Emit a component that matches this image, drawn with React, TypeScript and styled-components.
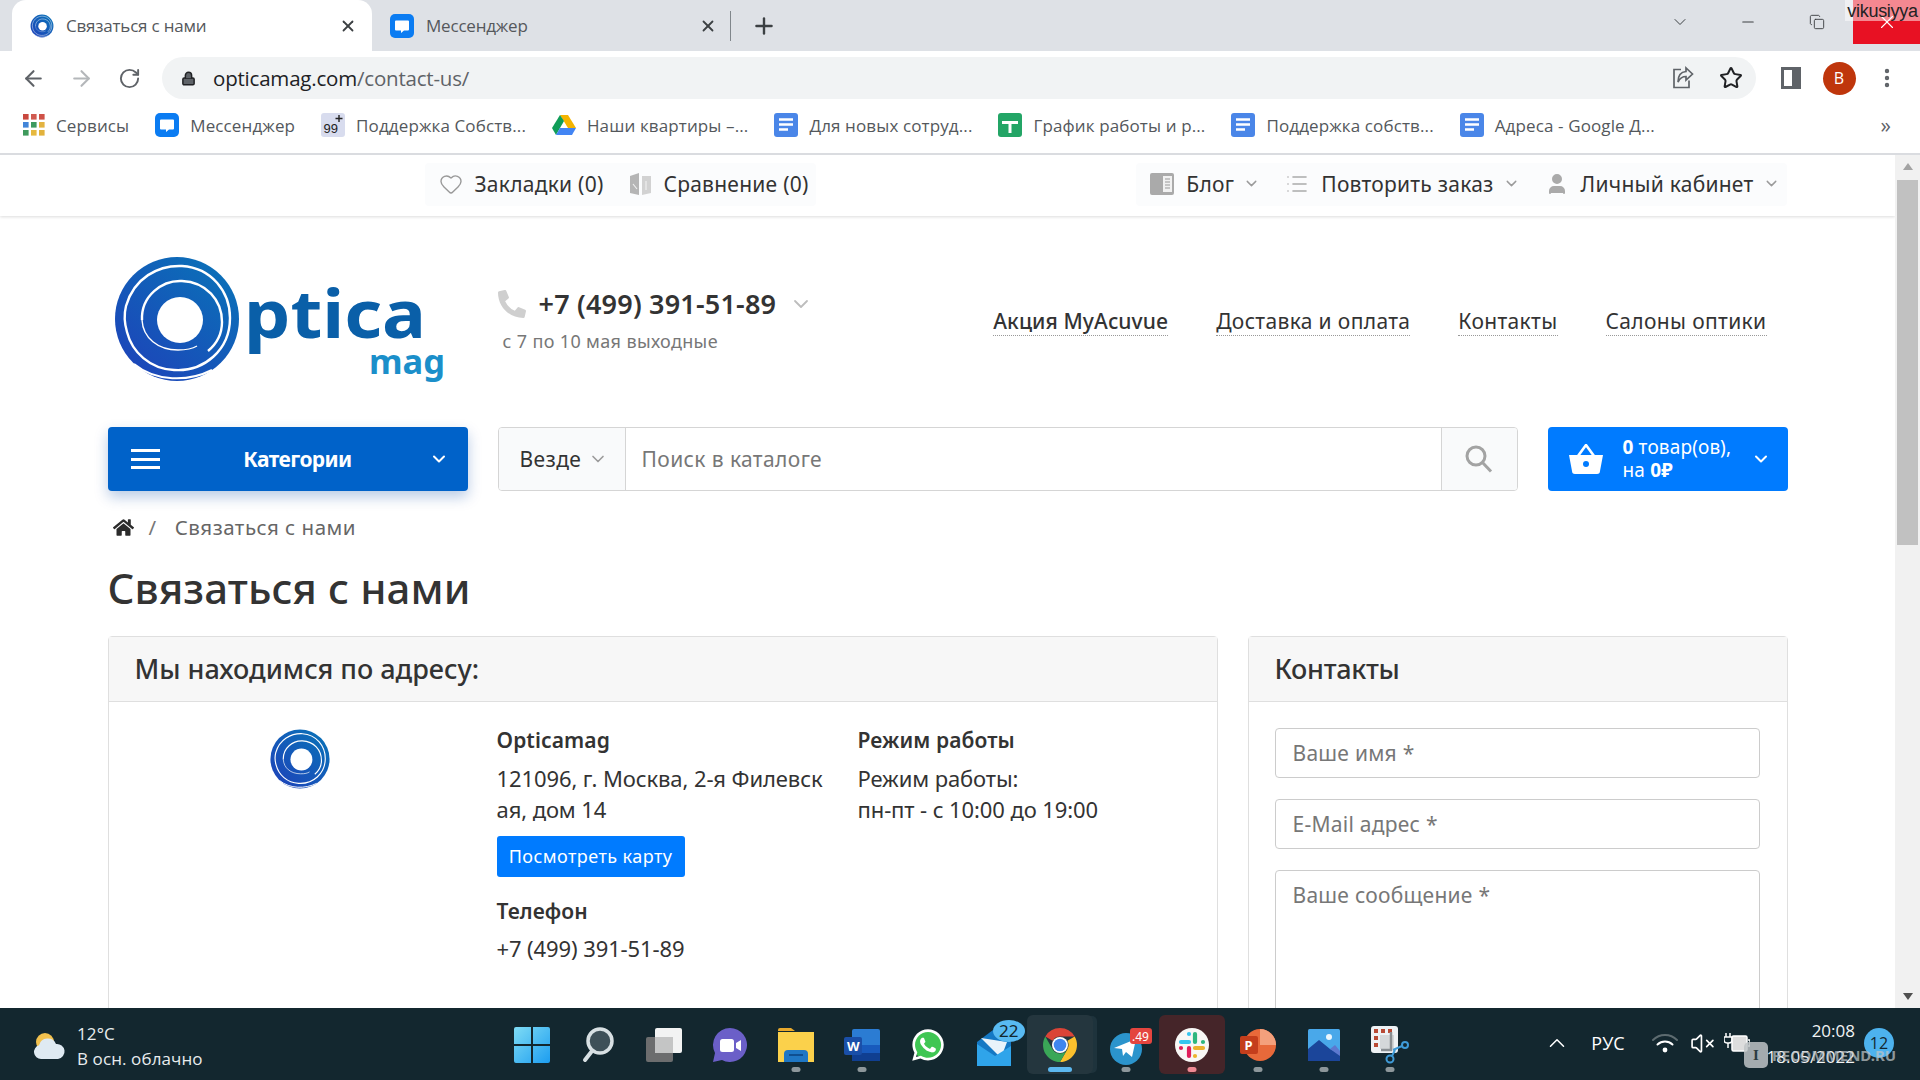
import React from "react";
import styled, { createGlobalStyle } from "styled-components";
import { ArrowLeft, ArrowRight, RotateCw, Lock, Star, ChevronDown, ChevronUp, Plus, X, Minus, Heart, VolumeX, Copy, EllipsisVertical, List, User } from "lucide-react";
import { FaPhoneAlt, FaHome, FaWhatsapp } from "react-icons/fa";

const SITE = `"Noto Sans", "Open Sans", sans-serif`;
const UI = `"Open Sans", "Noto Sans", sans-serif`;

const Global = createGlobalStyle`
  html, body { margin: 0; padding: 0; width: 1920px; height: 1080px; overflow: hidden; background: #fff; }
  * { box-sizing: border-box; }
  svg { display: block; flex: none; }
`;

const Screen = styled.div`
  width: 1920px; height: 1080px; display: flex; flex-direction: column; position: relative; overflow: hidden; font-family: ${UI};
`;
const TabStrip = styled.div`
  height: 51px; flex: none; background: #dee1e6; display: flex; padding-left: 12px; color: #45494d; position: relative;
`;
const Tab = styled.div<{ $active?: boolean }>`
  width: 360px; height: 51px; display: flex; align-items: center; gap: 12px; padding: 0 15px 0 18px;
  border-radius: 14px 14px 0 0; font-size: 17px; letter-spacing: -0.2px; background: ${(p) => (p.$active ? "#fff" : "transparent")};
  color: #55585c;
`;
const TabTitle = styled.span`flex: 1;`;
const Sep = styled.div`width: 1px; height: 30px; background: #80868b; margin-top: 11px; margin-left: -2px;`;
const NewTab = styled.div`width: 66px; display: flex; align-items: center; justify-content: center; color: #3c4043;`;
const WinControls = styled.div`margin-left: auto; display: flex; align-items: flex-start; color: #3c4043;`;
const WinBtn = styled.div<{ $w: number; $danger?: boolean }>`
  width: ${(p) => p.$w}px; height: 44px; display: flex; align-items: center; justify-content: center;
  background: ${(p) => (p.$danger ? "#e81123" : "transparent")}; color: ${(p) => (p.$danger ? "#fff" : "#3c4043")};
`;
const NameTag = styled.div`
  position: absolute; top: 0; right: 0; width: 75px; height: 21px; background: rgba(255,255,255,.5); color: #222;
  font: 18px/22px "Liberation Sans", sans-serif; white-space: nowrap; text-align: center; letter-spacing: -0.3px;
`;
const Toolbar = styled.div`
  height: 54px; flex: none; display: flex; align-items: center; padding-left: 9px; background: #fff; color: #5f6368;
`;
const ToolBtn = styled.div<{ $dim?: boolean }>`
  width: 48px; height: 48px; display: flex; align-items: center; justify-content: center; color: ${(p) => (p.$dim ? "#b4b7ba" : "#5f6368")};
`;
const Omni = styled.div`
  width: 1594px; height: 42px; margin: 0 11px 0 9px; border-radius: 21px; background: #f1f3f4; display: flex; align-items: center;
  padding: 0 13px 0 19px; font-size: 20.5px; letter-spacing: -0.2px; color: #202124; gap: 17px;
`;
const Url = styled.span`flex: 1; span { color: #5f6368; }`;
const OmniIcons = styled.div`display: flex; gap: 24px; align-items: center;`;
const Avatar = styled.div`
  width: 33px; height: 33px; border-radius: 50%; background: #bf360c; color: #fff; font-size: 16px; display: flex; align-items: center; justify-content: center;
`;
const Bookmarks = styled.div`
  height: 50px; flex: none; display: flex; align-items: center; gap: 26px; padding: 0 0 8px 23px; border-bottom: 2px solid #dadce0;
  font-size: 17px; letter-spacing: 0.12px; color: #54585c; position: relative; background: #fff;
`;
const Bookmark = styled.div`display: flex; align-items: center; gap: 11px; white-space: nowrap;`;
const More = styled.div`margin-left: auto; padding-right: 29px; font-size: 21px; color: #5f6368;`;

const Viewport = styled.div`flex: 1; min-height: 0; display: flex; overflow: hidden;`;
const Page = styled.div`flex: 1; min-width: 0; font-family: ${SITE}; color: #333; overflow: hidden;`;
const ScrollTrack = styled.div`
  width: 25px; flex: none; background: #f1f1f1; display: flex; flex-direction: column; align-items: center; color: #a3a3a3; position: relative;
`;
const ScrollArrow = styled.div<{ $down?: boolean }>`
  height: 25px; display: flex; align-items: center; justify-content: center; flex: none;
  &::after { content: ""; border: 5.5px solid transparent; ${(p) => (p.$down ? "border-top: 7px solid #505050; margin-top: 7px;" : "border-bottom: 7px solid #a3a3a3; margin-bottom: 7px;")} }
`;
const ScrollThumb = styled.div`width: 21px; height: 365px; background: #c1c1c1; flex: none;`;
const ScrollSpace = styled.div`flex: 1;`;

const TopBar = styled.div`height: 61px; box-shadow: 0 1px 3px rgba(0,0,0,.14); background: #fff; position: relative;`;
const Container = styled.div`width: 1680px; margin: 0 auto;`;
const TopInner = styled(Container)`display: flex; justify-content: space-between; padding: 8px 1px 0 317px;`;
const TopGroup = styled.div<{ $gap: number }>`height: 43px; background: #fbfcfd; display: flex; align-items: center; border-radius: 4px; padding: 0 7px 2px 14px; gap: ${(p) => p.$gap}px;`;
const TopLink = styled.div`display: flex; align-items: center; gap: 12px; font-size: 21px; letter-spacing: 0.25px; white-space: nowrap; color: #333;`;
const Caret = styled(ChevronDown)`color: #9b9b9b; margin-left: -3px;`;
const ScopeCaret = styled(ChevronDown)`color: #9b9b9b;`;

const HeaderRow = styled(Container)`height: 211px; display: flex; align-items: center;`;
const LogoCol = styled.div`width: 390px; padding-left: 4px; flex: none; margin-top: -5px;`;
const PhoneCol = styled.div`display: flex; flex-direction: column; gap: 6px; width: 440px; margin-top: -4px;`;
const PhoneRow = styled.div`display: flex; align-items: center; gap: 13px; font-size: 27px; font-weight: 600; letter-spacing: 0.2px; color: #333;`;
const PhoneNote = styled.div`font-size: 18px; color: #777; padding-left: 5px; letter-spacing: 0.35px; line-height: 26px;`;
const NavLinks = styled.div`flex: 1; display: flex; justify-content: flex-end; gap: 48px; padding-right: 21px;`;
const NavLink = styled.a<{ $strong?: boolean }>`
  font-size: 21px; letter-spacing: ${(p) => (p.$strong ? "0.1px" : "0.35px")}; font-weight: ${(p) => (p.$strong ? 500 : 400)}; color: #333; border-bottom: 1px dotted #999; line-height: 28px; white-space: nowrap;
`;
const SearchRow = styled(Container)`height: 64px; display: grid; grid-template-columns: 360px 1020px 240px; gap: 30px;`;
const CatButton = styled.div`
  background: #0062c9; border-radius: 4px; color: #fff; display: flex; align-items: center; padding: 0 19px 0 23px;
  box-shadow: 0 6px 14px rgba(0,70,160,.28); font-size: 21px; font-weight: 700; letter-spacing: -0.6px;
`;
const CatLabel = styled.span`flex: 1; text-align: center; padding-left: 7px;`;
const SearchBox = styled.div`border: 1px solid #d5d5d5; border-radius: 4px; display: flex; overflow: hidden;`;
const SearchScope = styled.div`
  width: 127px; background: #f9fafb; border-right: 1px solid #d5d5d5; display: flex; align-items: center; gap: 7px; padding-left: 21px; font-size: 21px; letter-spacing: 0.4px;
`;
const SearchInput = styled.input`
  flex: 1; border: 0; outline: 0; padding: 0 16px; font: 21px ${SITE}; letter-spacing: 0.4px; color: #333;
  &::placeholder { color: #777; opacity: 1; }
`;
const SearchBtn = styled.div`width: 76px; background: #f9fafb; border-left: 1px solid #d5d5d5; display: flex; align-items: center; justify-content: center; color: #a3a3a3;`;
const CartButton = styled.div`
  background: #007bff; border-radius: 4px; color: #fff; display: flex; align-items: center; padding: 0 19px 0 21px; gap: 20px; font-size: 19px; line-height: 23px; letter-spacing: 0.15px;
  b { font-weight: 700; }
`;
const CartText = styled.div`flex: 1; white-space: nowrap;`;

const Crumbs = styled(Container)`display: flex; align-items: center; padding: 22px 0 0 5px; height: 50px; font-size: 20.5px; color: #666; letter-spacing: 0.5px; gap: 15px;`;
const CrumbSep = styled.span`color: #777; margin-right: 3px;`;
const PageTitle = styled.h1`font-size: 42px; line-height: 50px; font-weight: 500; margin: 22px 0 23px; color: #333; letter-spacing: 0.1px;`;
const Cards = styled.div`display: grid; grid-template-columns: 1110px 540px; gap: 30px; align-items: start;`;
const Card = styled.section`border: 1px solid #dfdfdf; border-radius: 4px; height: 500px; background: #fff;`;
const CardHead = styled.h2<{ $ls: number }>`
  margin: 0; height: 65px; background: #f7f7f7; border-bottom: 1px solid #dfdfdf; padding-left: 26px; font-size: 27px; font-weight: 500; line-height: 63px; letter-spacing: ${(p) => p.$ls}px; color: #333;
`;
const InfoBody = styled.div`display: grid; grid-template-columns: 388px 361px 1fr; padding-top: 26px;`;
const LogoCell = styled.div`display: flex; justify-content: center; padding-right: 6px;`;
const InfoCol = styled.div`font-size: 22px; line-height: 30.5px; letter-spacing: -0.1px;`;
const InfoTitle = styled.div<{ $gap?: number }>`font-weight: 600; font-size: 21px; line-height: 28px; margin: ${(p) => p.$gap ?? -2}px 0 ${(p) => (p.$gap ? 8 : 9)}px; letter-spacing: 0.1px;`;
const MapBtn = styled.div`
  width: 188px; height: 41px; background: #007bff; color: #fff; border-radius: 3px; display: flex; align-items: center; justify-content: center; font-size: 18px; letter-spacing: 0.45px; margin-top: 12px;
`;
const FormBody = styled.div`padding: 26px 27px 0 26px; display: flex; flex-direction: column; gap: 21px;`;
const Field = styled.input`
  height: 50px; width: 485px; border: 1px solid #ccc; border-radius: 4px; padding: 0 17px; font: 21px ${SITE}; letter-spacing: 0.25px; outline: 0;
  &::placeholder { color: #777; opacity: 1; }
`;
const Area = styled.textarea`
  height: 200px; width: 485px; border: 1px solid #ccc; border-radius: 4px; padding: 10px 17px; font: 21px ${SITE}; letter-spacing: 0.25px; outline: 0; resize: none;
  &::placeholder { color: #777; opacity: 1; }
`;

const Taskbar = styled.div`height: 72px; flex: none; background: #13272f; display: flex; color: #fff; position: relative; font-family: ${UI};`;
const Weather = styled.div`width: 499px; display: flex; align-items: center; padding: 4px 0 0 32px; gap: 11px; flex: none;`;
const WeatherText = styled.div`font-size: 17px; line-height: 25px; color: #e8ecee; letter-spacing: 0.1px; white-space: nowrap;`;
const TaskIcons = styled.div`display: flex; align-items: flex-start; padding-top: 7px;`;
const TaskItem = styled.div<{ $dot?: string; $bg?: string; $stack?: boolean; $nudge?: number }>`
  width: 66px; height: 59px; position: relative; display: flex; align-items: center; justify-content: center; border-radius: 6px;
  padding-left: ${(p) => p.$nudge ?? 0}px;
  background: ${(p) => p.$bg ?? "transparent"};
  box-shadow: ${(p) => (p.$stack ? "5px 0 0 -1px #1e333c" : "none")};
  &::after { content: ""; display: ${(p) => (p.$dot ? "block" : "none")}; position: absolute; bottom: 2px; left: 50%; transform: translateX(-50%);
    width: ${(p) => (p.$dot === "#5cb8f0" ? "24px" : "9px")}; height: 5px; border-radius: 3px; background: ${(p) => p.$dot}; }
`;
const Tray = styled.div`margin-left: auto; display: flex; align-items: center; padding-right: 26px; color: #fff; height: 100%;`;
const TrayIcon = styled.div<{ $w: number }>`width: ${(p) => p.$w}px; display: flex; justify-content: center; align-items: center; padding-bottom: 2px;`;
const Lang = styled.div`font-size: 18px; width: 74px; text-align: center; padding-bottom: 2px;`;
const Clock = styled.div`width: 109px; text-align: right; font-size: 17px; line-height: 26px; padding: 0 9px 0 0; color: #f1f3f4; white-space: nowrap;`;
const NotifBadge = styled.div`
  width: 30px; height: 30px; border-radius: 50%; background: #4db2ee; color: #13272f; font-size: 16px; display: flex; align-items: center; justify-content: center; margin-bottom: 2px;
`;
const Stamp = styled.div`
  position: absolute; left: 1744px; top: 34px; display: flex; align-items: center; gap: 4px; color: rgba(190,195,198,.72); font: 700 15px "Noto Sans", sans-serif; white-space: nowrap;
`;
const StampIcon = styled.div`
  width: 24px; height: 26px; background: rgba(190,195,198,.85); border-radius: 5px; color: #2c3c42; display: flex; align-items: center; justify-content: center; font: 700 15px "Liberation Serif", serif;
`;
const Burger = styled.div`
  width: 29px; height: 20px; border-top: 3px solid #fff; border-bottom: 3px solid #fff; position: relative;
  &::after { content: ""; position: absolute; left: 0; right: 0; top: 5.5px; height: 3px; background: #fff; }
`;

const SpiralDefs = ({ id }: { id: string }) => (
  <defs>
    <linearGradient id={id} x1="0.85" y1="0.1" x2="0.15" y2="0.9">
      <stop offset="0" stopColor="#0b6fb8" />
      <stop offset="1" stopColor="#1c46b9" />
    </linearGradient>
  </defs>
);
const SpiralShapes = ({ id }: { id: string }) => (
  <g>
    <ellipse cx="65" cy="65" rx="62" ry="62" fill={`url(#${id})`} />
    <path d="M14 52 C22 24 46 11 70 12 C100 14 118 38 118 64 C118 96 92 118 62 116 C38 115 20 98 15 78 C12 68 12 60 14 52" fill="none" stroke="#fff" strokeWidth="2.4" />
    <path d="M30 66 C29 42 50 26 70 27 C94 28 110 46 110 68 C110 82 102 92 96 97" fill="none" stroke="#fff" strokeWidth="2.4" />
    <path d="M30 66 C31 84 46 96 66 96 C76 96 80 95 85 92" fill="none" stroke="#fff" strokeWidth="1.4" />
    <path d="M22 110 C44 128 76 128 100 116" fill="none" stroke="#fff" strokeWidth="2" />
    <ellipse cx="68" cy="66" rx="23" ry="23" fill="#fff" />
  </g>
);
const Spiral = ({ size, id }: { size: number; id: string }) => (
  <svg width={size} height={size} viewBox="0 0 130 130">
    <SpiralDefs id={id} />
    <SpiralShapes id={id} />
  </svg>
);
const Logo = () => (
  <svg width="340" height="134" viewBox="0 0 340 134">
    <SpiralDefs id="lg" />
    <g transform="translate(0 2)"><SpiralShapes id="lg" /></g>
    <text x="132" y="86" fontFamily="Noto Sans" fontWeight="700" fontSize="66" fill="#0a5fa8" textLength="182" lengthAdjust="spacingAndGlyphs">ptica</text>
    <text x="257" y="122" fontFamily="Noto Sans" fontWeight="700" fontSize="34" fill="#1b8fca" textLength="76" lengthAdjust="spacingAndGlyphs">mag</text>
  </svg>
);
const Messenger = () => (
  <svg width="24" height="24" viewBox="0 0 24 24">
    <rect width="24" height="24" rx="5" fill="#0b7cf2" />
    <path d="M6 6.500h12a1 1 0 0 1 1 1v8a1 1 0 0 1-1 1h-4l-3 2.500v-2.500H6a1 1 0 0 1-1-1v-8a1 1 0 0 1 1-1z" fill="#fff" />
  </svg>
);
const Apps = () => (
  <svg width="22" height="22" viewBox="0 0 22 22">
    {[["#c9483e","#d05a50","#cf5147"],["#4285d8","#3d9a5f","#e3b341"],["#3f9a5c","#e6b93f","#e2b23c"]].map((row, y) =>
      row.map((c, x) => <rect key={`${x}${y}`} x={x * 8} y={y * 8} width="5.6" height="5.6" fill={c} />)
    )}
  </svg>
);
const Ninety = () => (
  <svg width="24" height="24" viewBox="0 0 24 24">
    <rect width="24" height="24" rx="3" fill="#d8dcee" />
    <text x="2.500" y="20" fontSize="13" fontFamily="Liberation Sans" fill="#222">99</text>
    <path d="M18 2v7M14.500 5.500h7" stroke="#222" strokeWidth="1.4" />
  </svg>
);
const Drive = () => (
  <svg width="24" height="22" viewBox="0 0 24 22">
    <path d="M8 1h8l8 13h-8z" fill="#f4b400" />
    <path d="M8 1l-8 13 4 7 8-14z" fill="#0f9d58" />
    <path d="M4 21h16l4-7H8z" fill="#4285f4" />
  </svg>
);
const Doc = () => (
  <svg width="24" height="24" viewBox="0 0 24 24">
    <rect width="24" height="24" rx="3" fill="#4a86e8" />
    <path d="M5 6.500h14M5 11.500h14M5 16.500h9" stroke="#fff" strokeWidth="2.6" />
  </svg>
);
const Sheet = () => (
  <svg width="24" height="24" viewBox="0 0 24 24">
    <rect width="24" height="24" rx="3" fill="#23a566" />
    <path d="M4 9.500h16M12 9v11" stroke="#fff" strokeWidth="3" />
  </svg>
);
const Share = () => (
  <svg width="24" height="24" viewBox="0 0 24 24" fill="none" stroke="#5f6368" strokeWidth="1.7">
    <path d="M10 3.500H3v18h15v-7" />
    <path d="M21.500 8l-6.500-6v3.500C9.500 6 7 10.500 7 16c2-4 4.500-5.500 8-5.500V14z" />
  </svg>
);
const SidePanel = () => (
  <svg width="20" height="22" viewBox="0 0 20 22"><path fillRule="evenodd" d="M0 0h20v22H0zM3 3v16h8V3z" fill="#5f6368" /></svg>
);
const BlogIcon = () => (
  <svg width="24" height="22" viewBox="0 0 24 22">
    <rect width="24" height="22" rx="2" fill="#aaa" />
    <rect x="13" y="3" width="9" height="16" fill="#f1f1f1" />
    <path d="M15 6h5M15 9h5M15 12h5M15 15h5" stroke="#999" strokeWidth="1.2" />
  </svg>
);
const CompareIcon = () => (
  <svg width="21" height="24" viewBox="0 0 21 24">
    <path d="M0 4l9-3v22l-9-2z" fill="#b5b5b5" />
    <path d="M12 4h9v17l-9 2z" fill="#d2d2d2" />
    <path d="M3 12l4 5M16 9v9" stroke="#eee" strokeWidth="1.2" />
  </svg>
);
const Basket = () => (
  <svg width="34" height="30" viewBox="0 0 34 30">
    <path d="M0 11h34l-3 16a3 3 0 0 1-3 3H6a3 3 0 0 1-3-3z" fill="#fff" />
    <circle cx="17" cy="20" r="3" fill="#007bff" />
    <path d="M9 12L17 1l8 11" fill="none" stroke="#fff" strokeWidth="2.6" />
  </svg>
);
const Magnify = () => (
  <svg width="28" height="28" viewBox="0 0 28 28" fill="none" stroke="currentColor">
    <circle cx="11" cy="11" r="9" strokeWidth="3" />
    <path d="M17.500 17.500L26 26.500" strokeWidth="3" />
  </svg>
);
const Sun = () => (
  <svg width="34" height="30" viewBox="0 0 34 30">
    <circle cx="13" cy="11" r="9" fill="#f2c14e" />
    <path d="M9 28a7 7 0 0 1-2-13.700A9 9 0 0 1 24 13a7.500 7.500 0 0 1 2 15z" fill="#dfeaf2" />
  </svg>
);
const WinLogo = () => (
  <svg width="36" height="36" viewBox="0 0 36 36">
    <defs><linearGradient id="w" x1="0" y1="0" x2="1" y2="1"><stop offset="0" stopColor="#7fdcf5" /><stop offset="1" stopColor="#1c9df0" /></linearGradient></defs>
    <path d="M2 0h15v17H0V2a2 2 0 0 1 2-2zM19 0h15a2 2 0 0 1 2 2v15H19zM0 19h17v17H2a2 2 0 0 1-2-2zM19 19h17v15a2 2 0 0 1-2 2H19z" fill="url(#w)" />
  </svg>
);
const Magnifier = () => (
  <svg width="32" height="36" viewBox="0 0 32 36">
    <circle cx="18" cy="14" r="12" fill="#3e5058" stroke="#d8e0e3" strokeWidth="3.5" />
    <path d="M10 24L3 33" stroke="#d8e0e3" strokeWidth="4" strokeLinecap="round" />
  </svg>
);
const TaskView = () => (
  <svg width="36" height="34" viewBox="0 0 36 34">
    <rect x="9" y="0" width="27" height="25" rx="2" fill="#f2f3f3" />
    <rect x="0" y="9" width="27" height="25" rx="2" fill="#6c6d6e" />
    <rect x="9" y="9" width="18" height="16" fill="#c4c5c5" />
  </svg>
);
const ChatIcon = () => (
  <svg width="34" height="34" viewBox="0 0 34 34">
    <path d="M17 0a17 17 0 1 1-8 32L0 34l2-9A17 17 0 0 1 17 0z" fill="#6b5fc8" />
    <rect x="7" y="11" width="14" height="13" rx="2.500" fill="#fff" />
    <path d="M23 15l5-3v11l-5-3z" fill="#fff" />
  </svg>
);
const Folder = () => (
  <svg width="36" height="34" viewBox="0 0 36 34">
    <path d="M0 2a2 2 0 0 1 2-2h11l4 3H0z" fill="#e8a92d" />
    <path d="M0 4h36v30H0z" fill="#fbd14b" />
    <path d="M6 34v-8a4 4 0 0 1 4-4h16a4 4 0 0 1 4 4v8z" fill="#1f77c4" />
    <path d="M11 27h14" stroke="#0f4f90" strokeWidth="2" />
  </svg>
);
const Word = () => (
  <svg width="36" height="32" viewBox="0 0 36 32">
    <rect x="8" y="0" width="28" height="32" rx="2" fill="#2b7cd3" />
    <rect x="8" y="16" width="28" height="8" fill="#185abd" />
    <rect x="8" y="24" width="28" height="8" fill="#103f91" />
    <rect x="0" y="8" width="18" height="18" rx="2" fill="#1a4fa8" />
    <text x="3" y="22" fontFamily="Noto Sans" fontWeight="700" fontSize="13" fill="#fff">W</text>
  </svg>
);
const WhatsWrap = styled.div`position: relative; width: 36px; height: 36px; svg { position: absolute; inset: 0; }`;
const Whats = () => (
  <WhatsWrap>
    <svg width="36" height="36" viewBox="0 0 36 36"><circle cx="18" cy="18" r="15" fill="#3fc653" /></svg>
    <FaWhatsapp size={36} color="#fff" />
  </WhatsWrap>
);
const Mail = () => (
  <svg width="50" height="50" viewBox="0 0 50 50">
    <path d="M2 22L18 10l18 12v24H2z" fill="#1478c4" />
    <path d="M6 18l26 4-6 16z" fill="#e9f3fa" />
    <path d="M2 24l18 12 16-10v20H2z" fill="#2fa4ea" />
    <ellipse cx="34" cy="11" rx="16" ry="11" fill="#58baf2" />
    <text x="24" y="17" fontFamily="Noto Sans" fontSize="17" fill="#13272f">22</text>
  </svg>
);
const Chrome = () => (
  <svg width="34" height="34" viewBox="0 0 34 34">
    <path d="M17 0a17 17 0 0 1 14.700 8.500H17a8.500 8.500 0 0 0-7.400 4.300L2.300 8.500A17 17 0 0 1 17 0z" fill="#db4437" />
    <path d="M31.700 8.500A17 17 0 0 1 17 34l7.400-12.700A8.500 8.500 0 0 0 24.400 12.800z" fill="#fbc02d" />
    <path d="M2.300 8.500l7.300 12.800A8.500 8.500 0 0 0 24.400 21.300L17 34A17 17 0 0 1 2.300 8.500z" fill="#3aa757" />
    <circle cx="17" cy="17" r="8" fill="#fff" /><circle cx="17" cy="17" r="6.300" fill="#3f86ef" />
  </svg>
);
const Telegram = () => (
  <svg width="44" height="44" viewBox="0 0 44 44">
    <circle cx="17" cy="26" r="16" fill="#2b94cc" />
    <path d="M5 25l22-9-4 18-6-5-3 4-1-7z" fill="#fff" />
    <rect x="21" y="5" width="22" height="16" rx="3" fill="#e4453f" />
    <text x="23" y="18" fontFamily="Noto Sans" fontSize="12" fill="#fff">.49</text>
  </svg>
);
const Slack = () => (
  <svg width="34" height="34" viewBox="0 0 34 34">
    <circle cx="17" cy="17" r="17" fill="#f8f7f5" />
    <g strokeWidth="4.200" strokeLinecap="round">
      <path d="M6 14h8M14 6v0" stroke="#36c5f0" /><path d="M20 6v8M28 14h0" stroke="#2eb67d" />
      <path d="M20 20h8M20 28h0" stroke="#ecb22e" /><path d="M14 20v8M6 20h0" stroke="#e01e5a" />
    </g>
  </svg>
);
const Ppt = () => (
  <svg width="36" height="32" viewBox="0 0 36 32">
    <circle cx="20" cy="16" r="16" fill="#e8693a" />
    <path d="M20 0a16 16 0 0 1 16 16H20z" fill="#f4a07c" />
    <rect x="0" y="7" width="18" height="18" rx="2" fill="#c43e1c" />
    <text x="4.500" y="21" fontFamily="Noto Sans" fontWeight="700" fontSize="13" fill="#fff">P</text>
  </svg>
);
const Photos = () => (
  <svg width="32" height="32" viewBox="0 0 32 32">
    <rect width="32" height="32" rx="1.500" fill="#49a8ea" />
    <circle cx="21" cy="8" r="3" fill="#eaf6fd" />
    <path d="M0 32V20l11-9 11 9 10 5v7z" fill="#1b459a" />
    <path d="M22 20l5-4 5 6v5z" fill="#5d78cf" />
  </svg>
);
const Snip = () => (
  <svg width="38" height="38" viewBox="0 0 38 38">
    <rect x="0" y="0" width="27" height="27" rx="3" fill="#eef2f5" />
    <g fill="#b84a35"><rect x="3" y="3" width="4" height="4" /><rect x="10" y="3" width="4" height="4" /><rect x="17" y="3" width="4" height="4" /><rect x="3" y="10" width="4" height="4" /><rect x="3" y="17" width="4" height="4" /></g>
    <rect x="9" y="9" width="14" height="14" fill="#d5d8da" />
    <path d="M20 6v18l-10 0" stroke="#8a8f93" strokeWidth="2.500" fill="none" />
    <circle cx="34" cy="19" r="3" fill="none" stroke="#3f9bd8" strokeWidth="2" />
    <circle cx="19" cy="33" r="3.500" fill="none" stroke="#3f9bd8" strokeWidth="2" />
    <path d="M22 24l9-4M21 30l3-6" stroke="#3f9bd8" strokeWidth="2" />
  </svg>
);
const Wifi = () => (
  <svg width="26" height="22" viewBox="0 0 26 22" fill="none" strokeLinecap="round">
    <path d="M1 8a17 17 0 0 1 24 0" stroke="#5d6b70" strokeWidth="2" />
    <path d="M5.500 12.500a11 11 0 0 1 15 0" stroke="#fff" strokeWidth="2" />
    <circle cx="13" cy="18" r="2.400" fill="#fff" />
  </svg>
);
const Battery = () => (
  <svg width="26" height="22" viewBox="0 0 26 22" fill="none" stroke="#fff" strokeWidth="1.500">
    <path d="M2 1v4M6 1v4M0 5h8v3a3 3 0 0 1-3 3H3a3 3 0 0 1-3-3z" />
    <path d="M4 11v5" />
    <rect x="8" y="4" width="15" height="15" rx="1.500" fill="#ddd" />
    <path d="M24 8h2v6h-2" />
  </svg>
);

const bookmarks: [React.ReactNode, string][] = [
  [<Apps key="a" />, "Сервисы"],
  [<Messenger key="b" />, "Мессенджер"],
  [<Ninety key="c" />, "Поддержка Собств..."],
  [<Drive key="d" />, "Наши квартиры –..."],
  [<Doc key="e" />, "Для новых сотруд..."],
  [<Sheet key="f" />, "График работы и р..."],
  [<Doc key="g" />, "Поддержка собств..."],
  [<Doc key="h" />, "Адреса - Google Д..."],
];

const taskIcons: { icon: React.ReactNode; dot?: string; bg?: string; stack?: boolean; nudge?: number }[] = [
  { icon: <WinLogo /> },
  { icon: <Magnifier /> },
  { icon: <TaskView /> },
  { icon: <ChatIcon /> },
  { icon: <Folder />, dot: "#8d979b" },
  { icon: <Word />, dot: "#8d979b" },
  { icon: <Whats /> },
  { icon: <Mail />, nudge: 12 },
  { icon: <Chrome />, dot: "#5cb8f0", bg: "#24363e", stack: true },
  { icon: <Telegram />, dot: "#8d979b", nudge: 10 },
  { icon: <Slack />, dot: "#ef8a94", bg: "#452529" },
  { icon: <Ppt />, dot: "#8d979b" },
  { icon: <Photos />, dot: "#8d979b" },
  { icon: <Snip />, dot: "#8d979b" },
];

export default function App() {
  return (
    <Screen>
      <Global />
      <TabStrip>
        <Tab $active>
          <Spiral size={24} id="fav" />
          <TabTitle>Связаться с нами</TabTitle>
          <X size={18} strokeWidth={2.4} color="#3c4043" />
        </Tab>
        <Tab>
          <Messenger />
          <TabTitle>Мессенджер</TabTitle>
          <X size={18} strokeWidth={2.4} color="#3c4043" />
        </Tab>
        <Sep />
        <NewTab><Plus size={26} strokeWidth={2.2} /></NewTab>
        <WinControls>
          <WinBtn $w={70}><ChevronDown size={20} strokeWidth={1.2} /></WinBtn>
          <WinBtn $w={66}><Minus size={18} strokeWidth={1.4} /></WinBtn>
          <WinBtn $w={72}><Copy size={16} strokeWidth={1.4} /></WinBtn>
          <WinBtn $w={67} $danger><X size={22} strokeWidth={1.2} /></WinBtn>
        </WinControls>
      </TabStrip>
      <NameTag>vikusiyya</NameTag>
      <Toolbar>
        <ToolBtn><ArrowLeft size={25} strokeWidth={2} /></ToolBtn>
        <ToolBtn $dim><ArrowRight size={25} strokeWidth={2} /></ToolBtn>
        <ToolBtn><RotateCw size={23} strokeWidth={2} /></ToolBtn>
        <Omni>
          <Lock size={15} fill="#5f6368" strokeWidth={2.4} />
          <Url>opticamag.com<span>/contact-us/</span></Url>
          <OmniIcons>
            <Share />
            <Star size={24} strokeWidth={2} />
          </OmniIcons>
        </Omni>
        <ToolBtn><SidePanel /></ToolBtn>
        <ToolBtn><Avatar>В</Avatar></ToolBtn>
        <ToolBtn><EllipsisVertical size={24} strokeWidth={2.4} /></ToolBtn>
      </Toolbar>
      <Bookmarks>
        {bookmarks.map(([icon, label]) => (
          <Bookmark key={label}>{icon}{label}</Bookmark>
        ))}
        <More>»</More>
      </Bookmarks>

      <Viewport>
        <Page>
          <TopBar>
            <TopInner>
              <TopGroup $gap={27}>
                <TopLink><Heart size={24} strokeWidth={1.4} color="#999" />Закладки (0)</TopLink>
                <TopLink><CompareIcon />Сравнение (0)</TopLink>
              </TopGroup>
              <TopGroup $gap={25}>
                <TopLink><BlogIcon />Блог<Caret size={17} /></TopLink>
                <TopLink><List size={24} strokeWidth={1.6} color="#aaa" />Повторить заказ<Caret size={17} /></TopLink>
                <TopLink><User size={24} fill="#aaa" color="#aaa" />Личный кабинет<Caret size={17} /></TopLink>
              </TopGroup>
            </TopInner>
          </TopBar>
          <HeaderRow>
            <LogoCol><Logo /></LogoCol>
            <PhoneCol>
              <PhoneRow>
                <FaPhoneAlt size={28} color="#cfcfcf" />
                +7 (499) 391-51-89
                <ChevronDown size={24} color="#bdbdbd" strokeWidth={1.8} />
              </PhoneRow>
              <PhoneNote>с 7 по 10 мая выходные</PhoneNote>
            </PhoneCol>
            <NavLinks>
              <NavLink $strong>Акция MyAcuvue</NavLink>
              <NavLink>Доставка и оплата</NavLink>
              <NavLink>Контакты</NavLink>
              <NavLink>Салоны оптики</NavLink>
            </NavLinks>
          </HeaderRow>
          <SearchRow>
            <CatButton>
              <Burger />
              <CatLabel>Категории</CatLabel>
              <ChevronDown size={20} strokeWidth={2.4} />
            </CatButton>
            <SearchBox>
              <SearchScope>Везде<ScopeCaret size={20} /></SearchScope>
              <SearchInput placeholder="Поиск в каталоге" readOnly />
              <SearchBtn><Magnify /></SearchBtn>
            </SearchBox>
            <CartButton>
              <Basket />
              <CartText><b>0</b> товар(ов),<br />на <b>0₽</b></CartText>
              <ChevronDown size={20} strokeWidth={2.4} />
            </CartButton>
          </SearchRow>
          <Crumbs>
            <FaHome size={21} color="#2b2b2b" />
            <CrumbSep>/</CrumbSep>
            <span>Связаться с нами</span>
          </Crumbs>
          <Container>
            <PageTitle>Связаться с нами</PageTitle>
            <Cards>
              <Card>
                <CardHead $ls={0}>Мы находимся по адресу:</CardHead>
                <InfoBody>
                  <LogoCell><Spiral size={62} id="sm" /></LogoCell>
                  <InfoCol>
                    <InfoTitle>Opticamag</InfoTitle>
                    121096, г. Москва, 2-я Филевск<br />ая, дом 14
                    <MapBtn>Посмотреть карту</MapBtn>
                    <InfoTitle $gap={20}>Телефон</InfoTitle>
                    +7 (499) 391-51-89
                  </InfoCol>
                  <InfoCol>
                    <InfoTitle>Режим работы</InfoTitle>
                    Режим работы:<br />пн-пт - с 10:00 до 19:00
                  </InfoCol>
                </InfoBody>
              </Card>
              <Card>
                <CardHead $ls={-0.3}>Контакты</CardHead>
                <FormBody>
                  <Field placeholder="Ваше имя *" readOnly />
                  <Field placeholder="E-Mail адрес *" readOnly />
                  <Area placeholder="Ваше сообщение *" readOnly />
                </FormBody>
              </Card>
            </Cards>
          </Container>
        </Page>
        <ScrollTrack>
          <ScrollArrow />
          <ScrollThumb />
          <ScrollSpace />
          <ScrollArrow $down />
        </ScrollTrack>
      </Viewport>

      <Taskbar>
        <Weather>
          <Sun />
          <WeatherText>12°C<br />В осн. облачно</WeatherText>
        </Weather>
        <TaskIcons>
          {taskIcons.map((t, i) => (
            <TaskItem key={i} $dot={t.dot} $bg={t.bg} $stack={t.stack} $nudge={t.nudge}>{t.icon}</TaskItem>
          ))}
        </TaskIcons>
        <Tray>
          <TrayIcon $w={28}><ChevronUp size={26} strokeWidth={1.4} /></TrayIcon>
          <Lang>РУС</Lang>
          <TrayIcon $w={40}><Wifi /></TrayIcon>
          <TrayIcon $w={34}><VolumeX size={25} strokeWidth={1.6} /></TrayIcon>
          <TrayIcon $w={36}><Battery /></TrayIcon>
          <Clock>20:08<br />18.05/2022</Clock>
          <NotifBadge>12</NotifBadge>
        </Tray>
        <Stamp>
          <StampIcon>I</StampIcon>
          RECOMMEND.RU
        </Stamp>
      </Taskbar>
    </Screen>
  );
}
